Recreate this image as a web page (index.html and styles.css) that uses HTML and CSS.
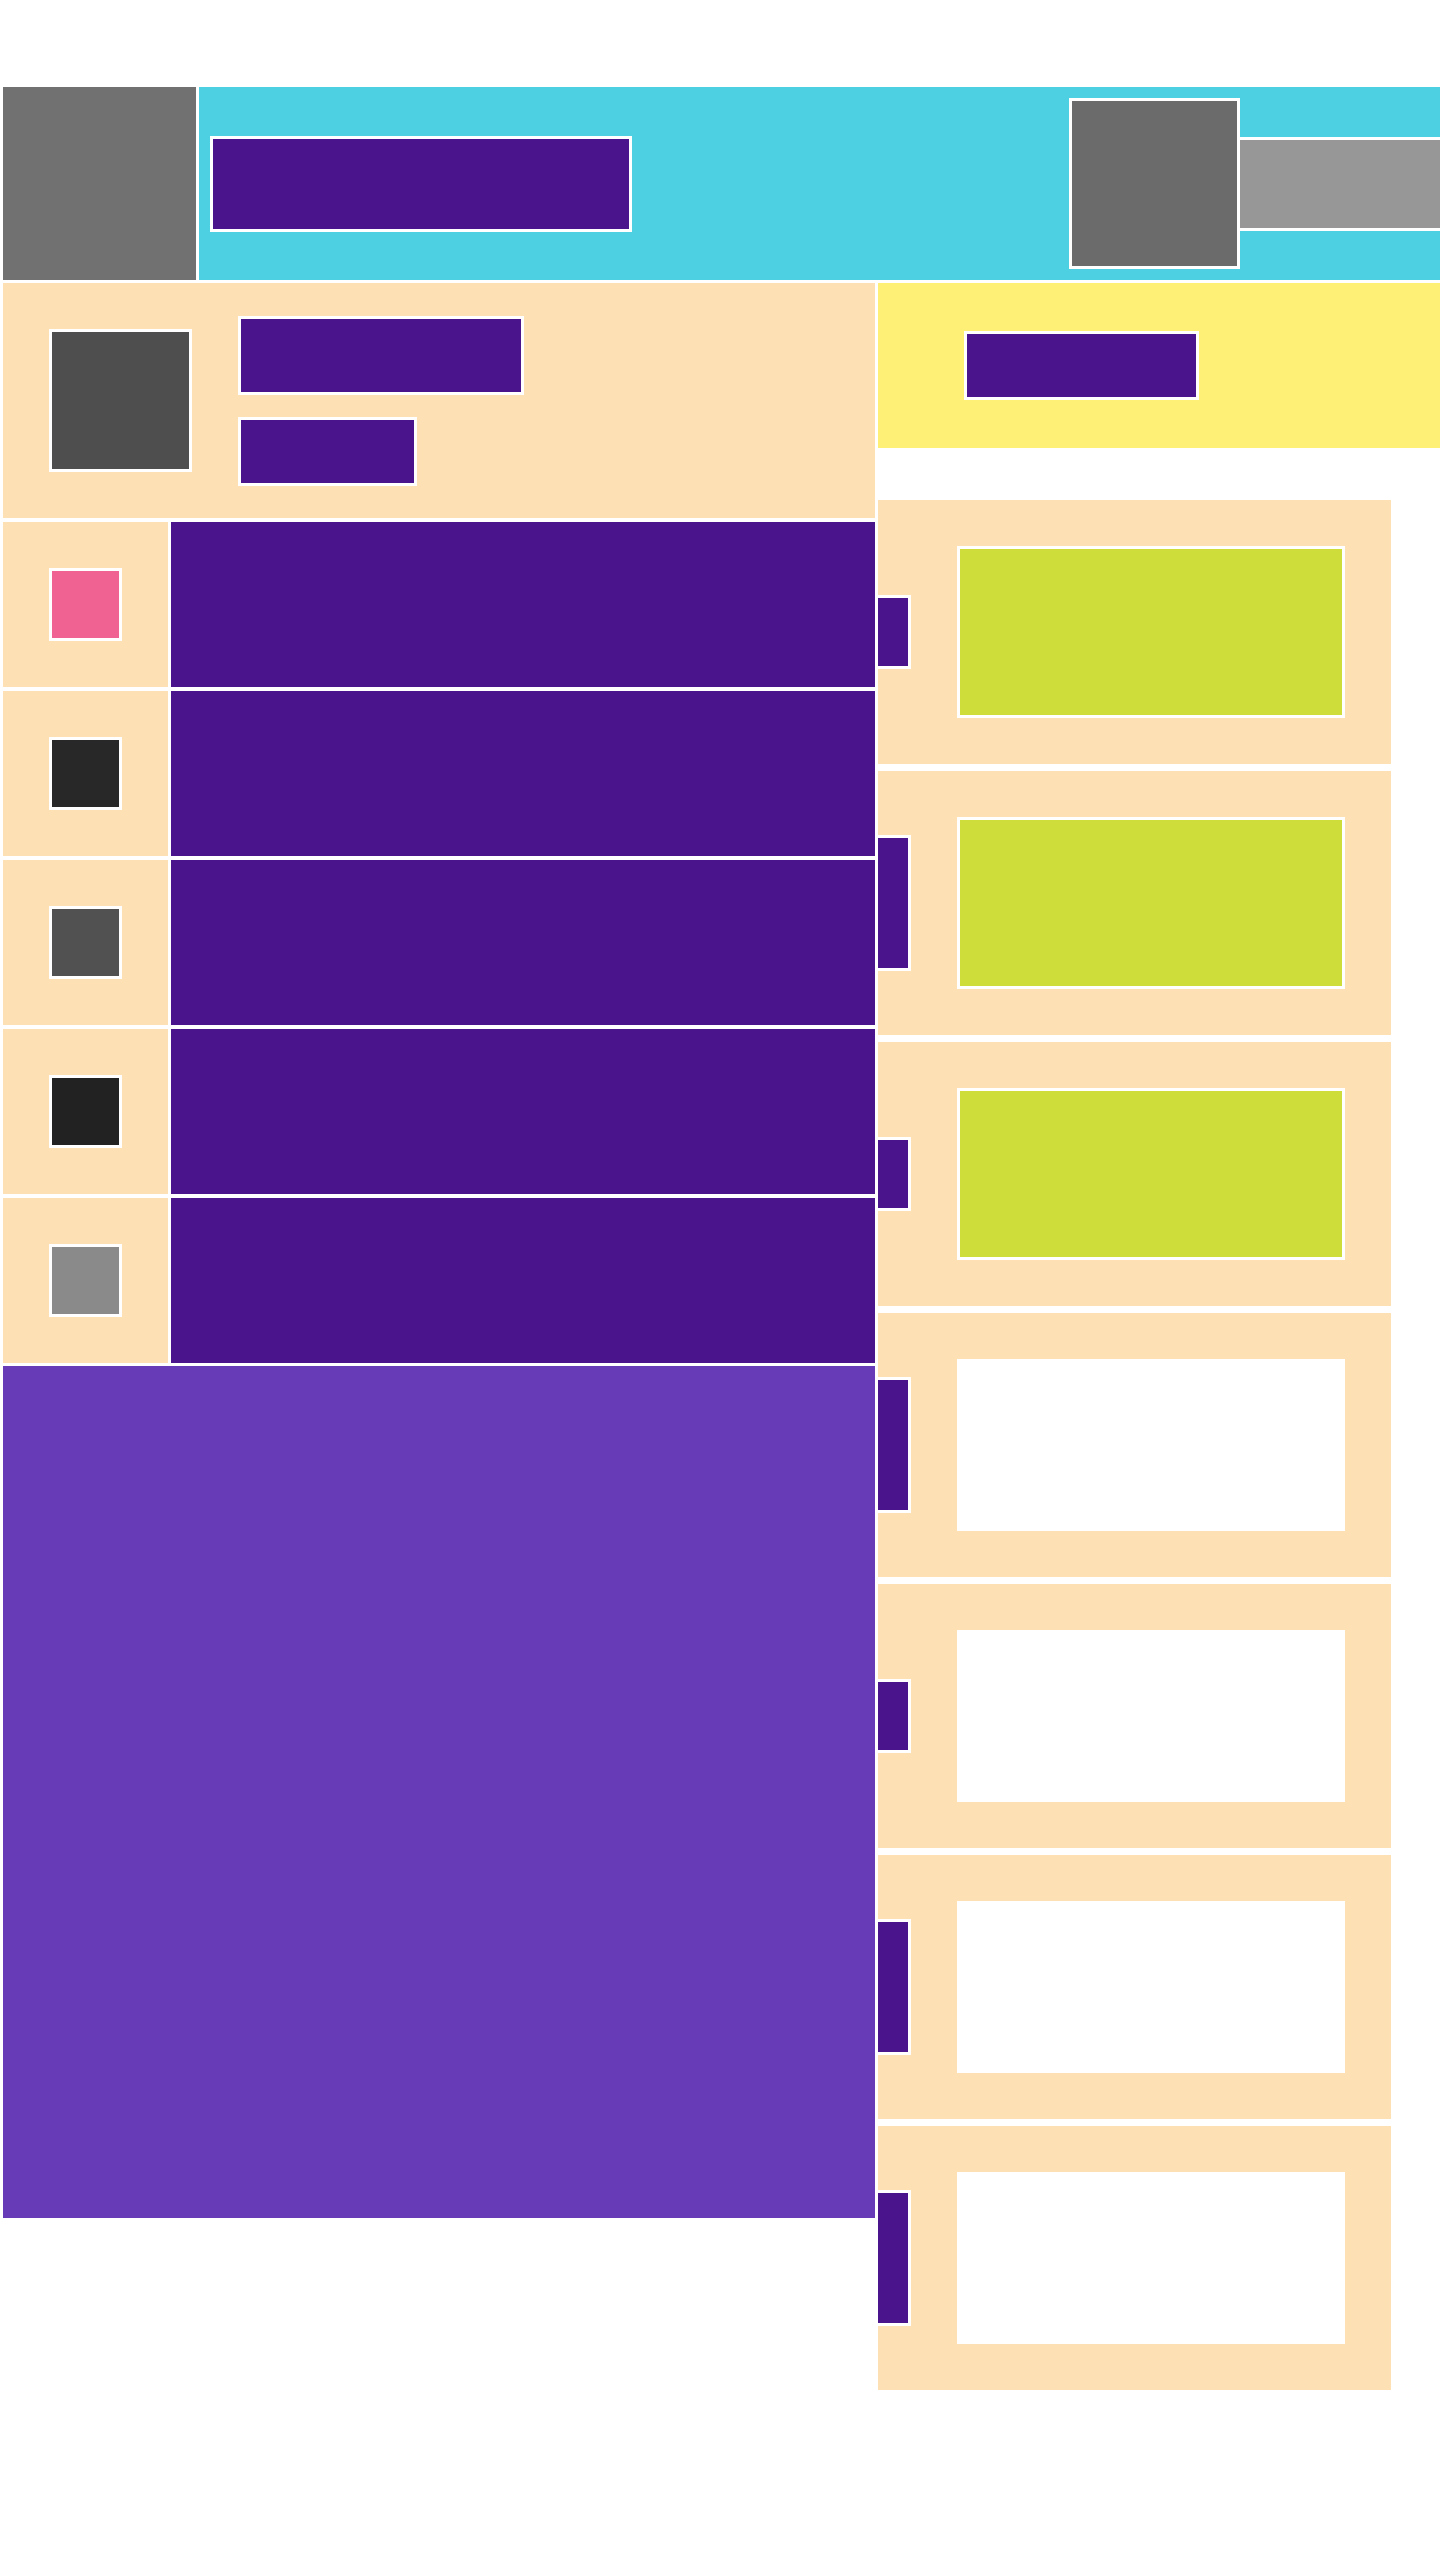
FILE: index.html
```html
<html>
<head>
  <title>Dashboard</title>
  <meta charset="utf-8">
  <meta content="width=device-width,initial-scale=1.0" name="viewport">
  <link rel="stylesheet" href="styles.css">
</head>

<body>
  <div id="page">
  <!--
  ==  Header above every page
  -->
    <div id="header">
      <div class="logo"></div>
      <div class="topbar">
        <div class="site-title"></div>
        <div class="account">
          <div class="account-avatar"></div>
          <div class="account-bar"></div>
        </div>
      </div>
    </div>

    <div id="main">
      <div id="left">
        <div class="hero">
          <div class="hero-avatar"></div>
          <div class="hero-text">
            <div class="hero-name"></div>
            <div class="hero-meta"></div>
          </div>
        </div>

        <div class="rows">
          <div class="row">
            <div class="row-icon"><span class="swatch pink"></span></div>
            <div class="row-body"></div>
          </div>
          <div class="row">
            <div class="row-icon"><span class="swatch dark"></span></div>
            <div class="row-body"></div>
          </div>
          <div class="row">
            <div class="row-icon"><span class="swatch mid"></span></div>
            <div class="row-body"></div>
          </div>
          <div class="row">
            <div class="row-icon"><span class="swatch black"></span></div>
            <div class="row-body"></div>
          </div>
          <div class="row">
            <div class="row-icon"><span class="swatch light"></span></div>
            <div class="row-body"></div>
          </div>
        </div>

        <div class="panel"></div>
      </div>

      <div id="right">
        <div class="notice">
          <div class="notice-label"></div>
        </div>

        <div class="cards">
          <div class="card">
            <div class="tab"></div>
            <div class="card-media lime"></div>
          </div>
          <div class="card">
            <div class="tab tall"></div>
            <div class="card-media lime"></div>
          </div>
          <div class="card">
            <div class="tab"></div>
            <div class="card-media lime"></div>
          </div>
          <div class="card">
            <div class="tab tall"></div>
            <div class="card-media blank"></div>
          </div>
          <div class="card">
            <div class="tab"></div>
            <div class="card-media blank"></div>
          </div>
          <div class="card">
            <div class="tab tall"></div>
            <div class="card-media blank"></div>
          </div>
          <div class="card">
            <div class="tab tall"></div>
            <div class="card-media blank"></div>
          </div>
        </div>
      </div>
    </div>
  </div>
</body>
</html>
```

FILE: styles.css
```css
body {
  margin: 0;
  padding: 0;
  background: #ffffff;
  font: 400 14px "Liberation Sans", arial, sans-serif;
  overflow-x: hidden;
}

#page {
  padding: 87px 0 0 3px;
}

/* header */

#header {
  display: flex;
  gap: 3px;
  height: 193px;
}

.logo {
  flex: none;
  width: 193px;
  background: #717171;
}

.topbar {
  flex: 1;
  display: flex;
  align-items: center;
  padding-left: 11px;
  background: #4dd0e1;
  overflow: hidden;
}

.site-title {
  width: 416px;
  height: 90px;
  border: 3px solid #fff;
  background: #4a148c;
}

.account {
  display: flex;
  align-items: center;
  margin-left: auto;
}

.account-avatar {
  width: 165px;
  height: 165px;
  border: 3px solid #fff;
  background: #6b6b6b;
}

.account-bar {
  width: 200px;
  height: 88px;
  border-top: 3px solid #fff;
  border-bottom: 3px solid #fff;
  background: #979797;
}

/* body */

#main {
  display: grid;
  grid-template-columns: 872px 562px;
  column-gap: 3px;
  margin-top: 3px;
}

.hero {
  display: flex;
  align-items: center;
  gap: 46px;
  height: 235px;
  padding-left: 46px;
  background: #fde0b4;
}

.hero-avatar {
  width: 137px;
  height: 137px;
  border: 3px solid #fff;
  background: #4e4e4e;
}

.hero-text {
  display: flex;
  flex-direction: column;
  gap: 22px;
}

.hero-name {
  width: 280px;
  height: 73px;
  border: 3px solid #fff;
  background: #4a148c;
}

.hero-meta {
  width: 173px;
  height: 63px;
  border: 3px solid #fff;
  background: #4a148c;
}

.rows {
  display: flex;
  flex-direction: column;
  gap: 4px;
  margin-top: 4px;
}

.row {
  display: flex;
  gap: 3px;
  height: 165px;
}

.row-icon {
  display: flex;
  align-items: center;
  justify-content: center;
  width: 165px;
  background: #fde0b4;
}

.row-body {
  flex: 1;
  background: #4a148c;
}

.swatch {
  display: block;
  width: 67px;
  height: 67px;
  border: 3px solid #fff;
}

.pink { background: #f06292; }
.dark { background: #282828; }
.mid { background: #515151; }
.black { background: #222222; }
.light { background: #8a8a8a; }

.panel {
  height: 852px;
  margin-top: 3px;
  background: #673ab7;
}

/* right column */

.notice {
  display: flex;
  align-items: center;
  height: 165px;
  padding-left: 86px;
  background: #fef076;
}

.notice-label {
  width: 229px;
  height: 63px;
  border: 3px solid #fff;
  background: #4a148c;
}

.cards {
  display: flex;
  flex-direction: column;
  gap: 7px;
  width: 513px;
  margin-top: 52px;
}

.card {
  display: flex;
  align-items: center;
  height: 264px;
  background: #fde0b4;
}

.tab {
  width: 30px;
  height: 68px;
  border: 3px solid #fff;
  border-left: 0;
  background: #4a148c;
}

.tab.tall {
  height: 130px;
}

.card-media {
  width: 382px;
  height: 166px;
  margin-left: 46px;
  border: 3px solid #fff;
}

.card-media.lime {
  background: #cfdd3a;
}

.card-media.blank {
  background: #ffffff;
}
```
